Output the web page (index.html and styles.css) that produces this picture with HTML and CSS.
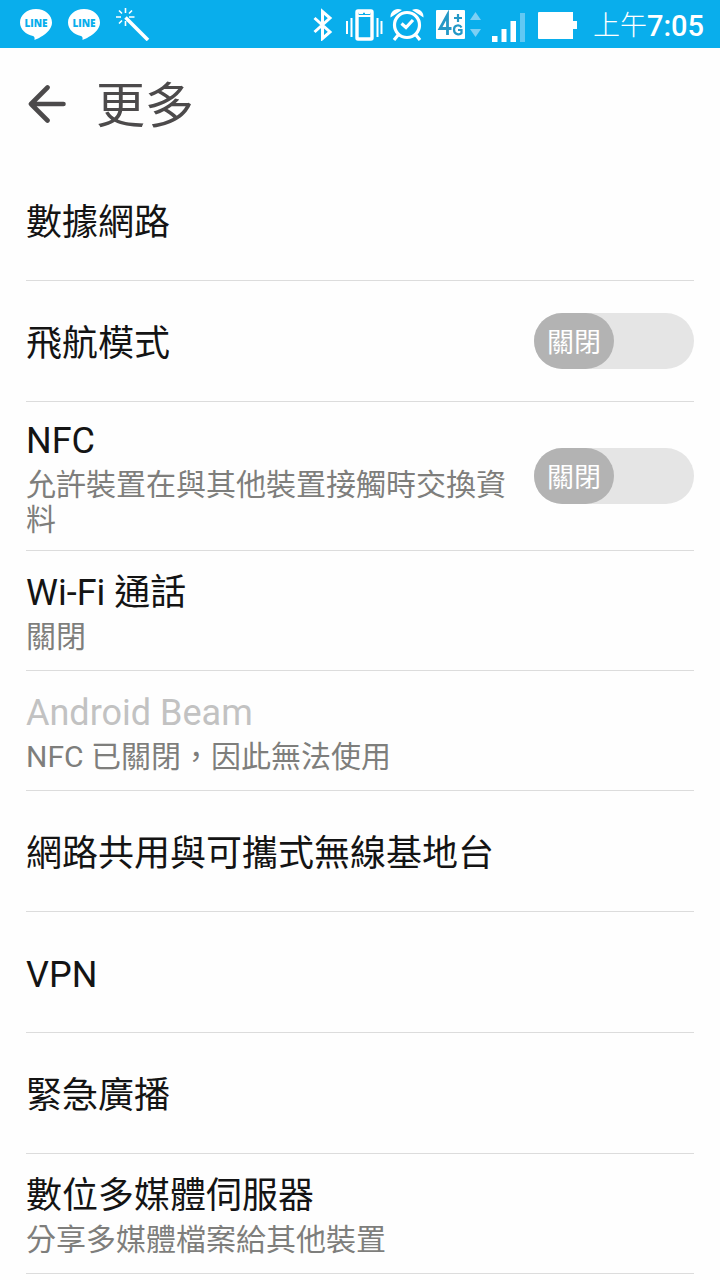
FILE: index.html
```html
<!DOCTYPE html>
<html lang="zh-Hant">
<head>
<meta charset="utf-8">
<meta name="viewport" content="width=device-width, initial-scale=1">
<title>更多</title>
<link rel="stylesheet" href="styles.css">
</head>
<body>
<div class="status-bar">
  <div class="notifications">
    <svg class="icon" width="32" height="32" viewBox="0 0 32 32" role="img" aria-label="LINE">
      <path fill="#fff" d="M16 1C7 1 0 7 0 14.500C0 21.500 6 26.500 13 28Q15 28.500 14.500 32C20 30 32 23.500 32 14.500C32 7 25 1 16 1Z"/>
      <text class="line-text" x="16" y="19" text-anchor="middle">LINE</text>
    </svg>
    <svg class="icon" width="32" height="32" viewBox="0 0 32 32" role="img" aria-label="LINE">
      <path fill="#fff" d="M16 1C7 1 0 7 0 14.500C0 21.500 6 26.500 13 28Q15 28.500 14.500 32C20 30 32 23.500 32 14.500C32 7 25 1 16 1Z"/>
      <text class="line-text" x="16" y="19" text-anchor="middle">LINE</text>
    </svg>
    <svg class="icon" width="34" height="34" viewBox="0 0 34 34" fill="none" stroke="#fff" aria-hidden="true">
      <path stroke-width="3.600" d="M9.500 10.500L32 33"/>
      <path stroke-width="1.600" d="M9.500 1V6M9.500 14V19M0 10H5M13 10H18.500M3 3.500L6 6.500M16 3.500L13 6.500M3 16.500L6 13.500"/>
    </svg>
  </div>
  <div class="indicators">
    <svg class="icon" width="20" height="34" viewBox="0 0 20 34" fill="none" stroke="#fff" stroke-width="3" aria-hidden="true">
      <path d="M1.500 11L17 25L9.500 31.500V4.500L17 11L1.500 25"/>
    </svg>
    <svg class="icon vibrate" width="38" height="34" viewBox="0 0 38 34" fill="none" stroke="#fff" aria-hidden="true">
      <rect x="12" y="4" width="15" height="28" rx="1" stroke-width="3.400"/>
      <path stroke-width="1.800" d="M13 9H26M14 6H18M20 6H25"/>
      <path stroke-width="2" d="M2 14V27M6.500 11V30M32.500 11V30M36.500 14V27"/>
    </svg>
    <svg class="icon" width="34" height="34" viewBox="0 0 34 34" fill="none" stroke="#fff" aria-hidden="true">
      <circle cx="17" cy="18" r="12.500" stroke-width="3.200"/>
      <path stroke-width="3.200" d="M11.500 16.500L16 20.500L23 13M8.500 27.500L4 33M25.500 27.500L30 33"/>
      <path fill="#fff" stroke="none" d="M.500 10.500C0 4 6 0 12 3ZM33.500 10.500C34 4 28 0 22 3Z"/>
    </svg>
    <svg class="icon network" width="46" height="30" viewBox="0 0 46 30" role="img" aria-label="4G+">
      <rect y="1" width="29" height="29" rx="1" fill="#fff"/>
      <path fill="none" stroke="#2498c6" stroke-width="2.800" d="M11.500 26V6L4 19.500H15.500"/>
      <path fill="none" stroke="#2498c6" stroke-width="2.200" d="M22 5V13M18 9H26M25.500 18.500C24 15.500 18 15.500 18 20.500C18 26 24 26 25.500 24V21H22"/>
      <path fill="#7ccff4" d="M34 11L39.500 3L45 11ZM34 20H45L39.500 28Z"/>
    </svg>
    <svg class="icon" width="34" height="36" viewBox="0 0 34 36" aria-hidden="true">
      <path fill="#fff" d="M0 30H5.500V36H0ZM9.500 23H14.500V36H9.500ZM18.500 15H24V36H18.500Z"/>
      <path fill="#62c8f3" d="M28 7H33V36H28Z"/>
    </svg>
    <svg class="icon" width="40" height="30" viewBox="0 0 40 30" aria-hidden="true">
      <path fill="#fff" d="M1 3H35V12H39V20H35V30H1Q0 30 0 29V4Q0 3 1 3Z"/>
    </svg>
    <time class="clock" datetime="07:05"><span class="meridiem">上午</span>7:05</time>
  </div>
</div>
<header class="header">
  <button class="back" type="button" aria-label="返回">
    <svg class="icon" width="38" height="40" viewBox="0 0 38 40" fill="none" stroke="#4c4a4b" stroke-width="4.600" stroke-linecap="round" stroke-linejoin="round" aria-hidden="true">
      <path d="M35.500 20H3M19.500 3.500L3 20L19.500 36.500"/>
    </svg>
  </button>
  <h1 class="heading">更多</h1>
</header>
<main class="list">
  <div class="row simple"><div class="title">數據網路</div></div>
  <div class="row simple">
    <label class="title" for="airplane">飛航模式</label>
    <div class="switch"><input class="switch-input" type="checkbox" role="switch" id="airplane"><span class="knob">關閉</span></div>
  </div>
  <div class="row">
    <label class="text" for="nfc"><span class="title">NFC</span><span class="summary">允許裝置在與其他裝置接觸時交換資料</span></label>
    <div class="switch"><input class="switch-input" type="checkbox" role="switch" id="nfc"><span class="knob">關閉</span></div>
  </div>
  <div class="row"><div class="text"><div class="title">Wi-Fi 通話</div><div class="summary">關閉</div></div></div>
  <div class="row"><div class="text"><div class="title disabled">Android Beam</div><div class="summary">NFC 已關閉，因此無法使用</div></div></div>
  <div class="row simple"><div class="title">網路共用與可攜式無線基地台</div></div>
  <div class="row simple"><div class="title">VPN</div></div>
  <div class="row simple"><div class="title">緊急廣播</div></div>
  <div class="row"><div class="text"><div class="title">數位多媒體伺服器</div><div class="summary">分享多媒體檔案給其他裝置</div></div></div>
</main>
</body>
</html>
```

FILE: styles.css
```css
* {
  box-sizing: border-box;
}

body {
  margin: 0;
  background: #fefefe;
  color: #141414;
  font-family: Roboto, "Noto Sans CJK TC", sans-serif;
}

.icon {
  display: block;
  flex: none;
}

.status-bar {
  display: flex;
  justify-content: space-between;
  height: 48px;
  padding: 0 16px 0 20px;
  background: #09aeec;
  color: #fff;
}

.notifications,
.indicators {
  display: flex;
  align-items: center;
}

.notifications {
  gap: 16px;
}

.indicators {
  gap: 12px;
}

.vibrate {
  margin-right: -5px;
}

.network {
  margin-right: -2px;
}

.line-text {
  font: 800 10px "Open Sans", sans-serif;
  fill: #09aeec;
}

.clock {
  display: flex;
  align-items: center;
  margin-left: 3px;
  padding-top: 4px;
  font-size: 29px;
  font-weight: 500;
  line-height: 44px;
}

.meridiem {
  font-size: 27px;
  font-weight: 300;
}

.header {
  display: flex;
  align-items: center;
  gap: 30px;
  height: 112px;
  padding: 0 28px;
  color: #4c4a4b;
}

.back {
  padding: 0;
  border: 0;
  background: none;
}

.heading {
  margin: 0;
  padding-top: 6px;
  font-size: 49px;
  font-weight: 400;
  line-height: 56px;
}

.list {
  padding: 0 26px;
}

.row {
  display: flex;
  align-items: center;
  justify-content: space-between;
  gap: 24px;
  min-height: 120px;
  border-bottom: 1px solid #dcdcdc;
}

.simple {
  min-height: 121px;
}

.simple .title {
  padding-top: 5px;
}

.text {
  display: block;
  padding: 16px 0 13px;
}

.text .title,
.summary {
  display: block;
}

.title {
  font-size: 36px;
  line-height: 46px;
}

.disabled {
  color: #c2c2c2;
}

.summary {
  margin-top: 3px;
  color: #7e7e7c;
  font-size: 30px;
  line-height: 35px;
}

.switch {
  position: relative;
  flex: none;
  width: 160px;
  height: 56px;
}

.switch-input {
  display: block;
  width: 100%;
  height: 100%;
  margin: 0;
  border-radius: 28px;
  background: #e5e5e5;
  appearance: none;
}

.knob {
  position: absolute;
  top: 0;
  left: 0;
  width: 80px;
  padding-top: 4px;
  border-radius: 28px;
  background: #b3b3b3;
  color: #fff;
  font-size: 27px;
  line-height: 52px;
  text-align: center;
  pointer-events: none;
}
```
